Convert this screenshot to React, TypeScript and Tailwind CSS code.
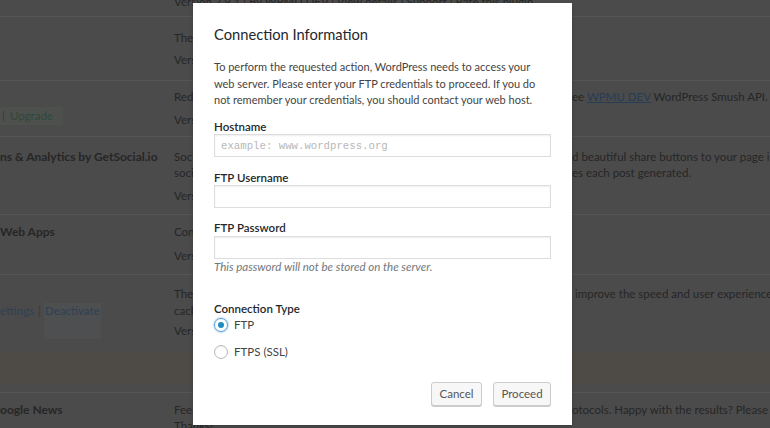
import React from "react";

function Tail({ hidden, tail, pl = "" }: { hidden: string; tail: React.ReactNode; pl?: string }) {
  return (
    <div className="flex whitespace-nowrap">
      <span className="w-[398px] shrink-0 overflow-hidden">{hidden}</span>
      <span className={pl}>{tail}</span>
    </div>
  );
}

function Background() {
  return (
    <div className="flex flex-col">
      {/* Row A */}
      <div className="h-[17px] border-b border-[#555] flex">
        <div className="w-[174px] shrink-0" />
        <div className="-mt-[6px] whitespace-nowrap">Version 2.9.1 | By WPMU DEV | View details | Support | Rate this plugin</div>
      </div>
      {/* Row B */}
      <div className="h-[64px] border-b border-[#555] flex">
        <div className="w-[174px] shrink-0" />
        <div className="flex-1 min-w-0 pt-[13px]">
          <div className="whitespace-nowrap">The easiest way to add widgets to your site.</div>
          <div className="mt-[6px] whitespace-nowrap">Version 1.3.2 | By Team</div>
        </div>
      </div>
      {/* Row C */}
      <div className="h-[56px] border-b border-[#555] flex">
        <div className="w-[174px] shrink-0 pt-[26px]">
          <div className="w-[63px] h-[18px] bg-[#4e504e] flex items-center pl-[2px]">
            <span className="text-[#3a3a3a]">|</span>
            <span className="ml-[5px] text-[#2c4a39]">Upgrade</span>
          </div>
        </div>
        <div className="flex-1 min-w-0 pt-[8px]">
          <Tail
            hidden="Reduce image file sizes, improve performance and boost your SEO using the fr"
            tail={
              <>
                ee <span className="underline text-[#273c55]">WPMU DEV</span> WordPress Smush API.
              </>
            }
          />
          <div className="mt-[7px] whitespace-nowrap">Version 2.7.4 | By WPMU DEV</div>
        </div>
      </div>
      {/* Row D */}
      <div className="h-[78px] border-b border-[#555] flex">
        <div className="w-[174px] shrink-0 pt-[12px] font-bold whitespace-nowrap text-[12px]">ns &amp; Analytics by GetSocial.io</div>
        <div className="flex-1 min-w-0 pt-[12px]">
          <Tail hidden="Social Media Share Buttons by GetSocial.io. Ad" tail="d beautiful share buttons to your page in" />
          <Tail hidden="social networks and track how many shares and visits each post generat" tail="es each post generated." />
          <div className="mt-[7px] whitespace-nowrap">Version 4.0 | By GetSocial</div>
        </div>
      </div>
      {/* Row E */}
      <div className="h-[60px] border-b border-[#555] flex">
        <div className="w-[174px] shrink-0 pt-[9px] font-bold whitespace-nowrap text-[12px]">Web Apps</div>
        <div className="flex-1 min-w-0 pt-[9px]">
          <div className="whitespace-nowrap">Convert your site into web apps.</div>
          <div className="mt-[8px] whitespace-nowrap">Version 1.0 | By Team</div>
        </div>
      </div>
      {/* Row F */}
      <div className="h-[118px] border-b border-[#555] flex flex-col">
        <div className="flex">
          <div className="w-[174px] shrink-0 pt-[28px] whitespace-nowrap flex">
            <span className="text-[#2f4154]">ettings</span>
            <span className="ml-[4px] text-[#3a3a3a]">|</span>
            <span className="ml-[3px] px-[1px] bg-[#4d4f51] text-[#2f4154]">Deactivate</span>
          </div>
          <div className="flex-1 min-w-0 pt-[10px] leading-[17px]">
            <Tail hidden="The highest rated and most complete WordPress caching plugin. W3TC help" tail="improve the speed and user experience of your site" pl="pl-[3px]" />
            <div className="whitespace-nowrap">caching, minification and content delivery network integration.</div>
            <div className="mt-[4px] leading-[16px] whitespace-nowrap">Version 0.9.5 | By Frederick Townes</div>
          </div>
        </div>
        <div className="mt-[13px] h-[32px] bg-[#4e4a46]" />
      </div>
      {/* Row G */}
      <div className="h-[40px] flex">
        <div className="w-[174px] shrink-0 pt-[9px] font-bold whitespace-nowrap text-[12px]">oogle News</div>
        <div className="flex-1 min-w-0 pt-[9px]">
          <Tail hidden="Feeds from Google News, filtered via keywords and translated into RSS and Atom pr" tail="otocols. Happy with the results? Please leave a rating" />
          <div className="whitespace-nowrap">Thanks!</div>
        </div>
      </div>
    </div>
  );
}

function Radio({ checked, label, mt }: { checked: boolean; label: string; mt: string }) {
  return (
    <div className={`flex items-center h-[16px] ${mt}`}>
      {checked ? (
        <span className="w-[14px] h-[14px] rounded-full border border-[#5b9dd9] shadow-[0_0_2px_rgba(30,140,190,0.8)] flex items-center justify-center">
          <span className="w-[6px] h-[6px] rounded-full bg-[#1e8cbe]" />
        </span>
      ) : (
        <span className="w-[14px] h-[14px] rounded-full border border-[#b4b9be] shadow-[inset_0_1px_2px_rgba(0,0,0,0.07)]" />
      )}
      <span className="ml-[6px] text-[#444]">{label}</span>
    </div>
  );
}

function Modal() {
  const input =
    "block w-full h-[23px] border border-[#ddd] bg-white shadow-[inset_0_1px_2px_rgba(0,0,0,0.07)] px-[6px] outline-none";
  return (
    <div className="absolute left-[193px] top-[3px] w-[379px] h-[422px] bg-white px-[21px] text-[#444] shadow-[0_2px_4px_rgba(0,0,0,0.2)] flex flex-col">
      <h2 className="pt-[21px] text-[14.7px] leading-[20px] text-[#23282d]">Connection Information</h2>
      <div className="mt-[15px] text-[11px] leading-[16.5px] whitespace-nowrap">
        <div>To perform the requested action, WordPress needs to access your</div>
        <div>web server. Please enter your FTP credentials to proceed. If you do</div>
        <div>not remember your credentials, you should contact your web host.</div>
      </div>
      <label className="block mt-[11.5px] leading-[14px] font-semibold text-[#23282d]">Hostname</label>
      <input
        className={`${input} font-['Liberation_Mono',monospace] text-[10.7px] placeholder:text-[#b8b8b8]`}
        placeholder="example: www.wordpress.org"
      />
      <label className="block mt-[14px] leading-[14px] font-semibold text-[#23282d]">FTP Username</label>
      <input className={input} />
      <label className="block mt-[13px] leading-[14px] font-semibold text-[#23282d]">FTP Password</label>
      <input className={`${input} mt-[1px]`} type="password" />
      <div className="mt-[1px] leading-[14px] italic text-[#72777c]">This password will not be stored on the server.</div>
      <div className="mt-[28px] leading-[14px] font-semibold text-[#23282d]">Connection Type</div>
      <Radio checked label="FTP" mt="mt-[1px]" />
      <Radio checked={false} label="FTPS (SSL)" mt="mt-[11px]" />
      <div className="mt-[22px] flex justify-end gap-[11px]">
        <button className="w-[51px] h-[24px] border border-[#ccc] bg-[#f7f7f7] rounded-[3px] shadow-[0_1px_0_#ccc] text-[#555]">Cancel</button>
        <button className="w-[58px] h-[24px] border border-[#ccc] bg-[#f7f7f7] rounded-[3px] shadow-[0_1px_0_#ccc] text-[#555]">Proceed</button>
      </div>
    </div>
  );
}

export default function App() {
  return (
    <div className="relative w-[770px] h-[428px] overflow-hidden bg-[#4b4b4b] font-['Lato',sans-serif] text-[#262626] text-[11.5px] leading-[16px]">
      <Background />
      <Modal />
    </div>
  );
}
